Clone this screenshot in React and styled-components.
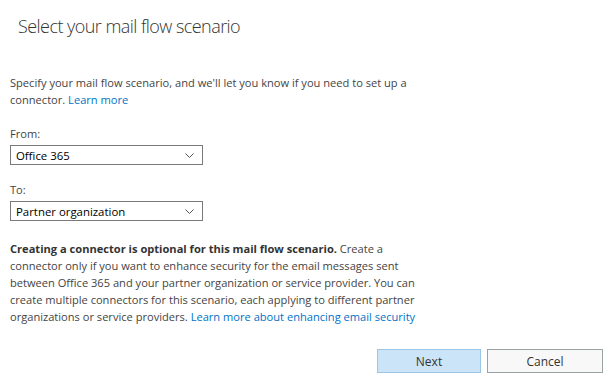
import styled, { createGlobalStyle } from 'styled-components';

const GlobalStyle = createGlobalStyle`
  html, body {
    margin: 0;
    padding: 0;
    background: #fff;
  }
  body {
    font-family: 'Open Sans', 'Noto Sans', sans-serif;
    color: #333;
  }
`;

const Page = styled.div`
  width: 609px;
  height: 382px;
  box-sizing: border-box;
  padding: 12px 6px 0 10px;
  display: flex;
  flex-direction: column;
`;

const Title = styled.h1`
  margin: 0 0 0 8px;
  font-size: 18px;
  font-weight: 300;
  letter-spacing: -0.55px;
  line-height: 28px;
  color: #333;
`;

const Text = styled.p`
  margin: ${(p) => p.$top || 0}px 0 0;
  font-size: 11.1px;
  line-height: 17px;
  color: #444;
  width: 428px;
`;

const Strong = styled.b`
  font-weight: 700;
  color: #333;
`;

const Link = styled.a`
  color: #0072c6;
  text-decoration: none;
  cursor: pointer;
`;

const Label = styled.div`
  margin-top: ${(p) => p.$top}px;
  font-size: 11.1px;
  line-height: 16px;
  color: #444;
`;

const SelectBox = styled.div`
  margin-top: 3px;
  width: 193px;
  height: 20px;
  box-sizing: border-box;
  border: 1px solid #7a7a7a;
  display: flex;
  align-items: center;
  justify-content: space-between;
  padding: 0 8px 0 5px;
  font-size: 11.4px;
  color: #000;
  background: #fff;
`;

const Actions = styled.div`
  margin-top: auto;
  margin-bottom: 9px;
  display: flex;
  justify-content: flex-end;
  gap: 6px;
`;

const Button = styled.button`
  height: 24px;
  width: ${(p) => p.$width}px;
  box-sizing: border-box;
  font-family: inherit;
  font-size: 12px;
  color: #333;
  background: ${(p) => (p.$primary ? '#cce4f7' : '#f8f8f8')};
  border: 1px solid ${(p) => (p.$primary ? '#9bc6e6' : '#9aa3a3')};
  cursor: pointer;
`;

const Chevron = () => (
  <svg width="9" height="5" viewBox="0 0 9 5" fill="none">
    <path d="M0.5 0.5 L4.5 4.5 L8.5 0.5" stroke="#555" strokeWidth="1" />
  </svg>
);

const Select = ({ value }) => (
  <SelectBox>
    <span>{value}</span>
    <Chevron />
  </SelectBox>
);

export default function App() {
  return (
    <>
      <GlobalStyle />
      <Page>
        <Title>Select your mail flow scenario</Title>
        <Text $top={34}>
          Specify your mail flow scenario, and we'll let you know if you need to set up a
          connector. <Link>Learn more</Link>
        </Text>
        <Label $top={18}>From:</Label>
        <Select value="Office 365" />
        <Label $top={17}>To:</Label>
        <Select value="Partner organization" />
        <Text $top={19}>
          <Strong>Creating a connector is optional for this mail flow scenario.</Strong> Create a
          connector only if you want to enhance security for the email messages sent between
          Office 365 and your partner organization or service provider. You can create multiple
          connectors for this scenario, each applying to different partner organizations or
          service providers. <Link>Learn more about enhancing email security</Link>
        </Text>
        <Actions>
          <Button $primary $width={104}>Next</Button>
          <Button $width={116}>Cancel</Button>
        </Actions>
      </Page>
    </>
  );
}
